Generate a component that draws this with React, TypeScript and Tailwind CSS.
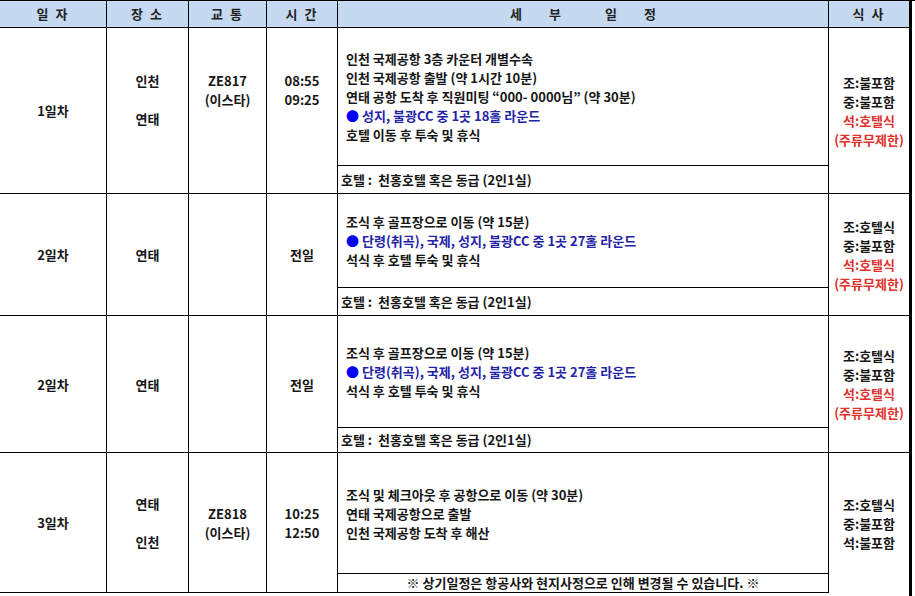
import React from "react";

type Day = {
  day: string;
  place: string[];
  flight?: string[];
  time: string[];
  timePad?: string;
  placePad?: string;
  lines: { text: string; blue?: boolean }[];
  foot: string;
  footCenter?: boolean;
  meals: { text: string; red?: boolean }[];
  h: string;
  footH: string;
  last?: boolean;
};

const days: Day[] = [
  {
    day: "1일차",
    place: ["인천", "", "연태"],
    placePad: "pb-[22px]",
    flight: ["ZE817", "(이스타)"],
    time: ["08:55", "09:25"],
    timePad: "pb-[41px]",
    lines: [
      { text: "인천 국제공항 3층 카운터 개별수속" },
      { text: "인천 국제공항 출발 (약 1시간 10분)" },
      { text: "연태 공항 도착 후 직원미팅 “000- 0000님” (약 30분)" },
      { text: "성지, 불광CC 중 1곳 18홀 라운드", blue: true },
      { text: "호텔 이동 후 투숙 및 휴식" },
    ],
    foot: "호텔 :  천홍호텔 혹은 동급 (2인1실)",
    meals: [
      { text: "조:불포함" },
      { text: "중:불포함" },
      { text: "석:호텔식", red: true },
      { text: "(주류무제한)", red: true },
    ],
    h: "h-[166px]",
    footH: "h-[28px]",
  },
  {
    day: "2일차",
    place: ["연태"],
    time: ["전일"],
    lines: [
      { text: "조식 후 골프장으로 이동 (약 15분)" },
      { text: "단령(취곡), 국제, 성지, 불광CC 중 1곳 27홀 라운드", blue: true },
      { text: "석식 후 호텔 투숙 및 휴식" },
    ],
    foot: "호텔 :  천홍호텔 혹은 동급 (2인1실)",
    meals: [
      { text: "조:호텔식" },
      { text: "중:불포함" },
      { text: "석:호텔식", red: true },
      { text: "(주류무제한)", red: true },
    ],
    h: "h-[122px]",
    footH: "h-[28px]",
  },
  {
    day: "2일차",
    place: ["연태"],
    time: ["전일"],
    lines: [
      { text: "조식 후 골프장으로 이동 (약 15분)" },
      { text: "단령(취곡), 국제, 성지, 불광CC 중 1곳 27홀 라운드", blue: true },
      { text: "석식 후 호텔 투숙 및 휴식" },
    ],
    foot: "호텔 :  천홍호텔 혹은 동급 (2인1실)",
    meals: [
      { text: "조:호텔식" },
      { text: "중:불포함" },
      { text: "석:호텔식", red: true },
      { text: "(주류무제한)", red: true },
    ],
    h: "h-[137px]",
    footH: "h-[25px]",
  },
  {
    day: "3일차",
    place: ["연태", "", "인천"],
    flight: ["ZE818", "(이스타)"],
    time: ["10:25", "12:50"],
    lines: [
      { text: "조식 및 체크아웃 후 공항으로 이동 (약 30분)" },
      { text: "연태 국제공항으로 출발" },
      { text: "인천 국제공항 도착 후 해산" },
    ],
    foot: "※ 상기일정은 항공사와 현지사정으로 인해 변경될 수 있습니다. ※",
    footCenter: true,
    meals: [{ text: "조:호텔식" }, { text: "중:불포함" }, { text: "석:불포함" }],
    h: "h-[140px]",
    footH: "h-[19px]",
    last: true,
  },
];

const grid = "grid grid-cols-[107px_82px_78px_71px_491px_83px] items-start";

function Stack({ items, pad = "" }: { items: string[]; pad?: string }) {
  return (
    <div className={`flex h-full flex-col items-center justify-center ${pad}`}>
      {items.map((t, i) => (
        <div key={i} className="h-[19px] leading-[19px]">
          {t}
        </div>
      ))}
    </div>
  );
}

export default function App() {
  return (
    <div className="h-[596px] w-[915px] overflow-hidden bg-white font-['Noto_Sans_CJK_KR',sans-serif] text-[13px] font-bold text-[#161616]">
      <div className="border-t border-black">
        {/* header */}
        <div className={grid}>
          {["일 자", "장 소", "교 통", "시 간"].map((h) => (
            <div
              key={h}
              className="flex h-[27px] items-center justify-center whitespace-pre border-r border-b border-black bg-[#c5d9f1] tracking-[2px] text-[#222]"
            >
              {h}
            </div>
          ))}
          <div className="flex h-[27px] items-center justify-center gap-[27px] border-r border-b border-black bg-[#c5d9f1] text-[#222]">
            <span>세</span>
            <span className="mr-[17px]">부</span>
            <span>일</span>
            <span>정</span>
          </div>
          <div className="flex h-[27px] items-center justify-center whitespace-pre border-r-[3px] border-b border-black bg-[#c5d9f1] tracking-[2px] text-[#222]">
            식 사
          </div>
        </div>

        {days.map((d, i) => (
          <div key={i} className={grid}>
            <div className={`${d.h} border-r border-b border-black`}>
              <Stack items={[d.day]} />
            </div>
            <div className={`${d.h} border-r border-b border-black`}>
              <Stack items={d.place} pad={d.placePad} />
            </div>
            <div className={`${d.h} border-r border-b border-black`}>
              {d.flight && <Stack items={d.flight} pad={d.timePad} />}
            </div>
            <div className={`${d.h} border-r border-b border-black`}>
              <Stack items={d.time} pad={d.timePad} />
            </div>
            <div className={`${d.h} flex flex-col border-r border-b border-black`}>
              <div className="flex flex-1 flex-col justify-center pl-[8px]">
                {d.lines.map((l, j) => (
                  <div key={j} className={`h-[19px] leading-[19px] ${l.blue ? "text-[#2323a8]" : ""}`}>
                    {l.blue && <span className="mr-[3px] text-[#0000f0]">●</span>}
                    {l.text}
                  </div>
                ))}
              </div>
              <div
                className={`${d.footH} flex items-center whitespace-pre border-t border-black ${
                  d.footCenter ? "justify-center" : "pl-[3px]"
                }`}
              >
                {d.foot}
              </div>
            </div>
            <div
              className={`${d.last ? "h-[144px]" : `${d.h} border-b`} border-r-[3px] border-black`}
            >
              <div className={`flex h-full flex-col items-center justify-center ${d.last ? "pb-[4px]" : ""}`}>
                {d.meals.map((m, j) => (
                  <div key={j} className={`h-[19px] leading-[19px] ${m.red ? "text-[#e0322d]" : ""}`}>
                    {m.text}
                  </div>
                ))}
              </div>
            </div>
          </div>
        ))}
      </div>
    </div>
  );
}
